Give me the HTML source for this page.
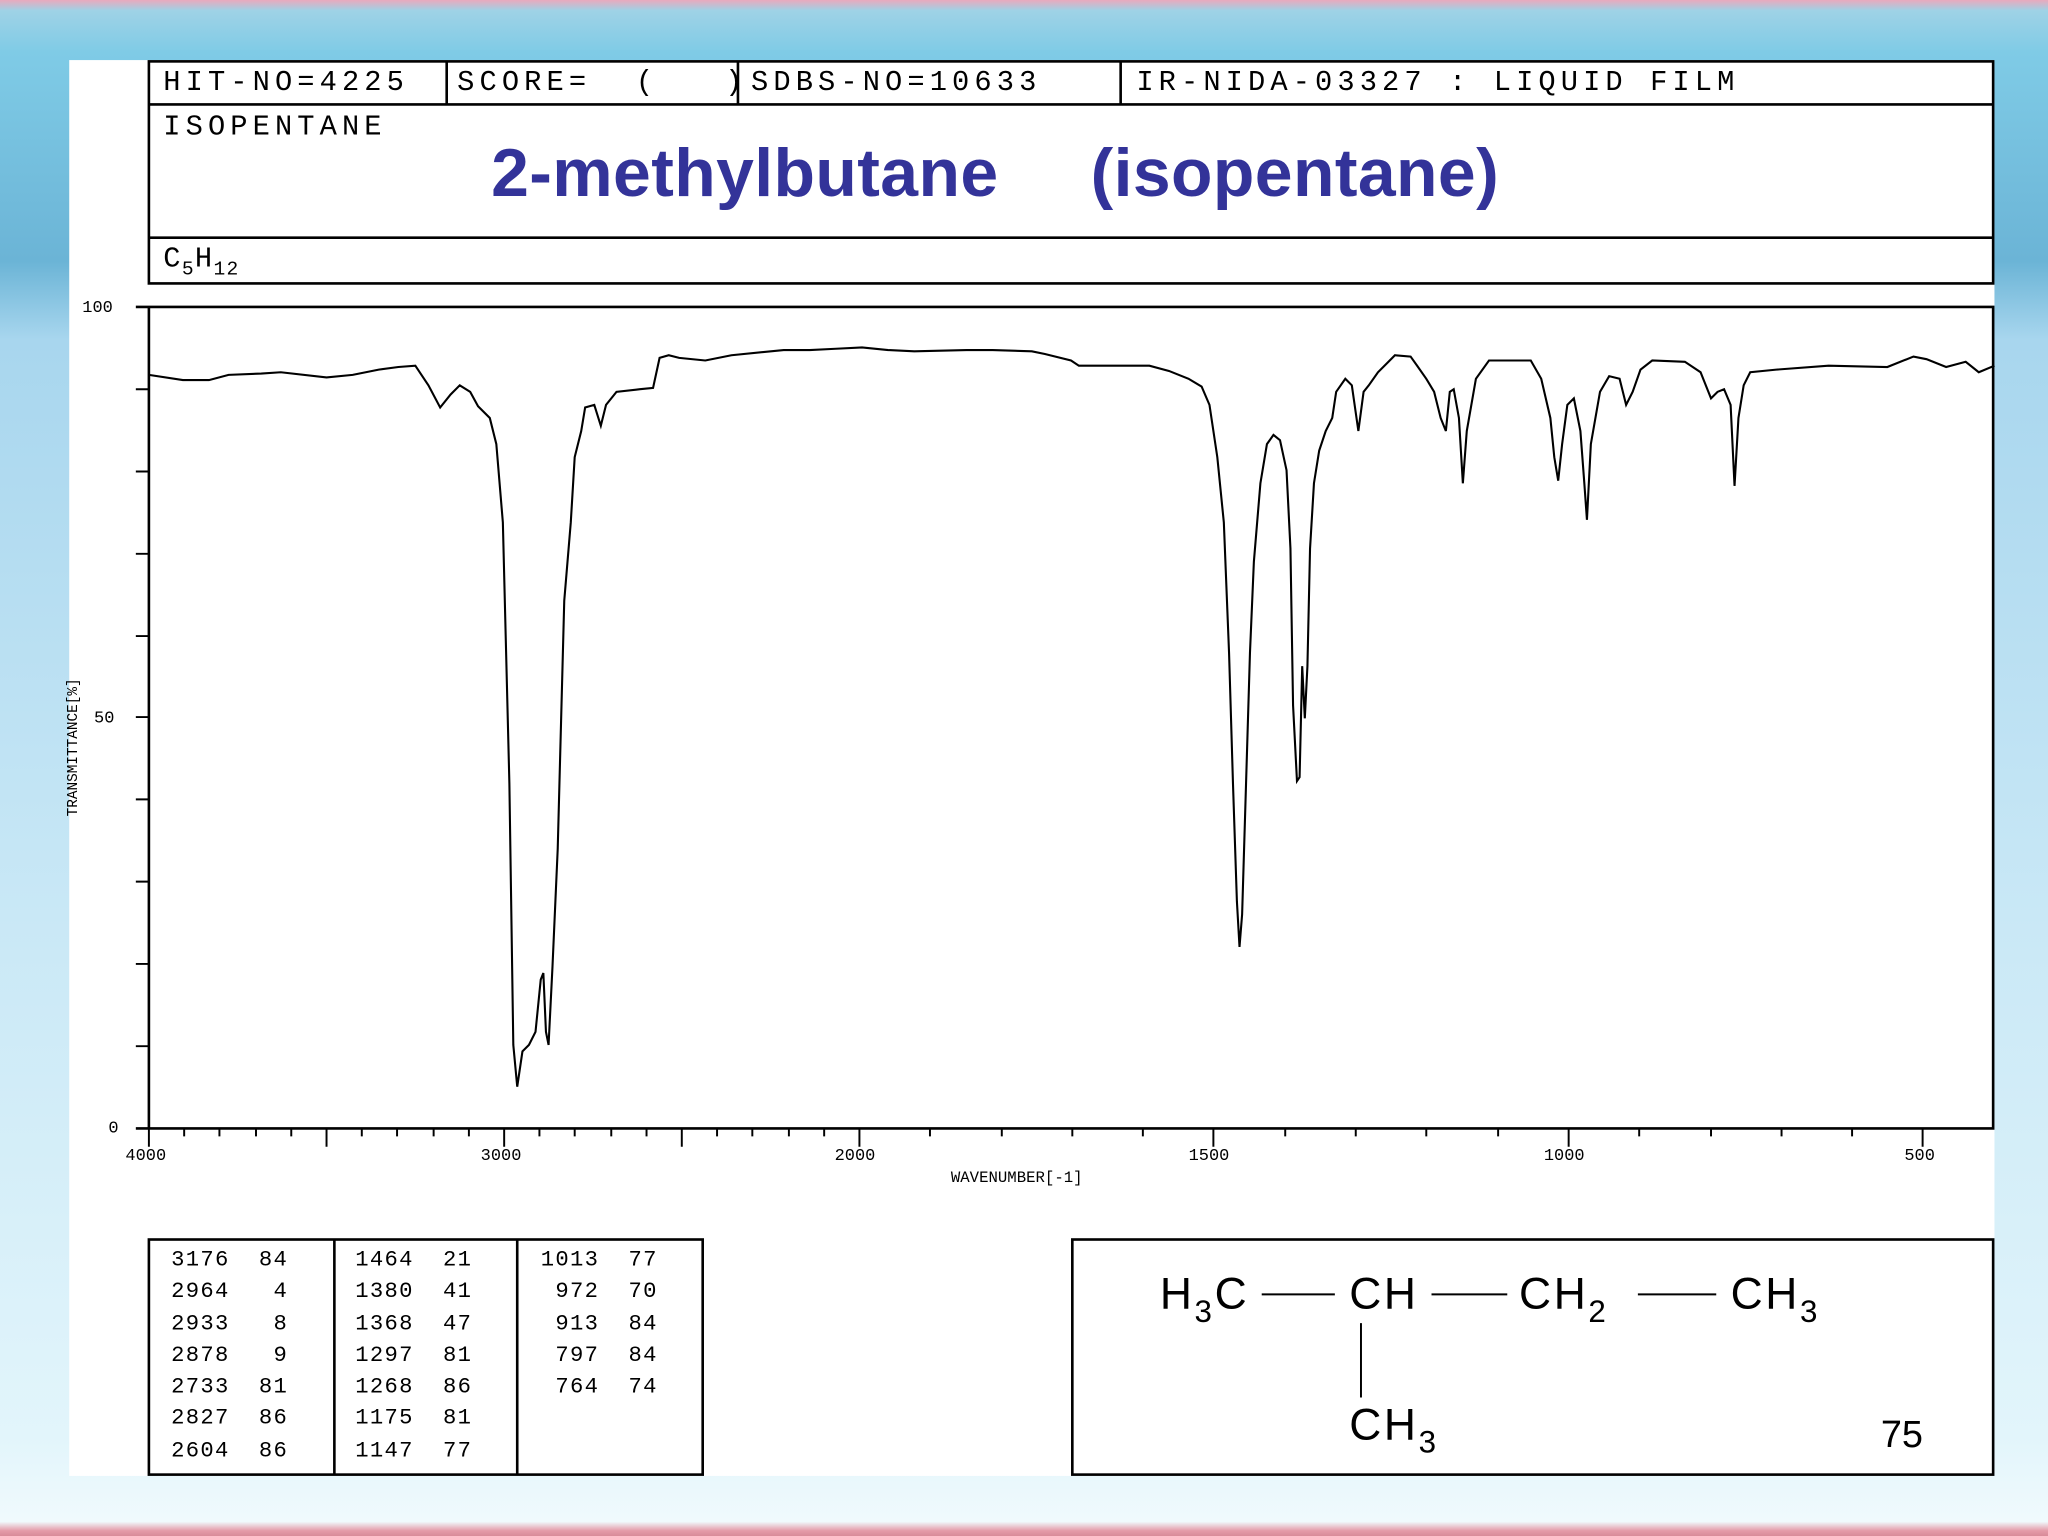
<!DOCTYPE html>
<html><head><meta charset="utf-8"><style>
html,body{margin:0;padding:0;width:2048px;height:1536px;overflow:hidden;}
#w{position:absolute;left:0;top:0;width:1568px;height:1176px;transform:scale(1.306122);transform-origin:0 0;
background:linear-gradient(180deg,#e9a9bd 0,#9fd2e6 8px,#7fcbe6 40px,#6bb4d6 200px,#a8d6ee 260px,#c9e8f6 700px,#e2f5fb 1100px,#f0fafd 1165px,#e59aa8 1172px,#d88a98 1176px);
font-family:"Liberation Mono",monospace;}
#p{position:absolute;left:53px;top:46px;width:1474px;height:1084px;background:#fff;}
.t{position:absolute;font-size:22px;letter-spacing:3.9px;color:#000;white-space:pre;line-height:1;}
.s{position:absolute;font-size:13px;color:#000;white-space:pre;line-height:1;}
.title{position:absolute;font-family:"Liberation Sans",sans-serif;font-weight:bold;font-size:52px;color:#333399;white-space:pre;line-height:1;}
.pk{position:absolute;font-size:17px;line-height:24.3px;white-space:pre;color:#000;letter-spacing:1px;}
.st{position:absolute;font-family:"Liberation Sans",sans-serif;font-size:34px;letter-spacing:2px;white-space:pre;line-height:1;color:#000;}
</style></head><body><div id="w">
<div id="p"></div>
<svg width="1568" height="1176" style="position:absolute;left:0;top:0">
<g fill="none" stroke="#000" stroke-width="2">
<rect x="114" y="47" width="1412" height="170"/>
<line x1="114" y1="80" x2="1526" y2="80"/>
<line x1="114" y1="182" x2="1526" y2="182"/>
<line x1="342" y1="47" x2="342" y2="80"/>
<line x1="565" y1="47" x2="565" y2="80"/>
<line x1="858" y1="47" x2="858" y2="80"/>
<polyline points="104,235 1526,235 1526,864 104,864"/>
<line x1="114" y1="235" x2="114" y2="864"/>
<rect x="114" y="949" width="424" height="180"/>
<line x1="256" y1="949" x2="256" y2="1129"/>
<line x1="396" y1="949" x2="396" y2="1129"/>
<rect x="821" y="949" width="705" height="180"/>
</g>
<g stroke="#000" stroke-width="1.5">
<path d="M104 298h10M104 361h10M104 424h10M104 487h10M104 549h10M104 612h10M104 675h10M104 738h10M104 801h10"/>
<path d="M114 864v14M141 864v6M168 864v6M196 864v6M223 864v6M250 864v14M277 864v6M304 864v6M332 864v6M359 864v6M386 864v14M413 864v6M440 864v6M468 864v6M495 864v6M522 864v14M549 864v6M576 864v6M604 864v6M631 864v6M658 864v14M712 864v6M767 864v6M821 864v6M875 864v6M929 864v14M984 864v6M1038 864v6M1092 864v6M1147 864v6M1201 864v14M1255 864v6M1310 864v6M1364 864v6M1418 864v6M1472 864v14"/>
<line x1="1042" y1="1013" x2="1042" y2="1070"/>
<line x1="966" y1="991" x2="1022" y2="991"/>
<line x1="1096" y1="991" x2="1154" y2="991"/>
<line x1="1254" y1="991" x2="1314" y2="991"/>
</g>
<polyline fill="none" stroke="#000" stroke-width="1.6" points="114,287 140,291 160,291 175,287 200,286 215,285 250,289 270,287 290,283 305,281 318,280 328,295 337,312 345,302 352,295 360,300 366,311 375,320 380,340 385,400 390,600 393,800 396,832 400,805 405,800 410,790 414,750 416,745 418,790 420,800 423,740 427,650 432,460 437,400 440,350 445,330 448,312 455,310 460,326 464,310 468,305 472,300 490,298 500,297 505,274 512,272 520,274 540,276 560,272 600,268 620,268 640,267 660,266 680,268 700,269 740,268 760,268 790,269 800,271 820,276 826,280 870,280 880,280 895,284 910,290 920,296 926,310 932,350 937,400 941,500 944,600 947,690 949,725 951,700 954,600 957,500 960,430 965,370 970,340 975,333 980,337 985,360 988,420 990,540 993,598 995,595 997,510 999,550 1001,510 1003,420 1006,370 1010,345 1015,330 1020,320 1023,300 1030,290 1035,295 1040,330 1044,300 1048,295 1055,285 1062,278 1068,272 1080,273 1085,280 1092,290 1098,300 1103,320 1107,330 1110,300 1113,298 1117,320 1120,370 1123,330 1130,290 1140,276 1172,276 1180,290 1187,320 1190,350 1193,368 1196,340 1200,310 1205,305 1210,330 1213,370 1215,398 1218,340 1225,300 1232,288 1240,290 1245,310 1250,300 1256,283 1265,276 1290,277 1302,285 1310,305 1315,300 1320,298 1325,310 1328,372 1331,320 1335,295 1340,285 1360,283 1400,280 1445,281 1465,273 1475,275 1490,281 1505,277 1515,285 1527,280"/>
</svg>
<div class="t" style="left:125px;top:53px">HIT-NO=4225</div>
<div class="t" style="left:350px;top:53px">SCORE=  (   )</div>
<div class="t" style="left:575px;top:53px">SDBS-NO=10633</div>
<div class="t" style="left:870px;top:53px">IR-NIDA-03327 : LIQUID FILM</div>
<div class="t" style="left:125px;top:87px">ISOPENTANE</div>
<div class="t" style="left:125px;top:188px;letter-spacing:1px">C<span style="font-size:15px;position:relative;top:6px">5</span>H<span style="font-size:15px;position:relative;top:6px">12</span></div>
<div class="title" style="left:376px;top:107px;letter-spacing:0.3px">2-methylbutane</div>
<div class="title" style="left:835px;top:107px;letter-spacing:0.3px">(isopentane)</div>
<div class="s" style="left:63px;top:229px">100</div>
<div class="s" style="left:72px;top:543px">50</div>
<div class="s" style="left:83px;top:857px">0</div>
<div class="s" style="left:52px;top:625px;transform:rotate(-90deg);transform-origin:0 0;font-size:11px">TRANSMITTANCE[%]</div>
<div class="s" style="left:96px;top:878px">4000</div>
<div class="s" style="left:368px;top:878px">3000</div>
<div class="s" style="left:639px;top:878px">2000</div>
<div class="s" style="left:910px;top:878px">1500</div>
<div class="s" style="left:1182px;top:878px">1000</div>
<div class="s" style="left:1458px;top:878px">500</div>
<div class="s" style="left:728px;top:896px;font-size:12px">WAVENUMBER[-1]</div>
<div class="pk" style="left:131px;top:954px">3176  84
2964   4
2933   8
2878   9
2733  81
2827  86
2604  86</div>
<div class="pk" style="left:272px;top:954px">1464  21
1380  41
1368  47
1297  81
1268  86
1175  81
1147  77</div>
<div class="pk" style="left:414px;top:954px">1013  77
 972  70
 913  84
 797  84
 764  74</div>
<div class="st" style="left:888px;top:974px">H<span style="font-size:24px;position:relative;top:10px">3</span>C</div>
<div class="st" style="left:1033px;top:974px">CH</div>
<div class="st" style="left:1163px;top:974px">CH<span style="font-size:24px;position:relative;top:10px">2</span></div>
<div class="st" style="left:1325px;top:974px">CH<span style="font-size:24px;position:relative;top:10px">3</span></div>
<div class="st" style="left:1033px;top:1074px">CH<span style="font-size:24px;position:relative;top:10px">3</span></div>
<div style="position:absolute;left:1440px;top:1083px;font-family:'Liberation Sans',sans-serif;font-size:29px">75</div>
</div></body></html>
